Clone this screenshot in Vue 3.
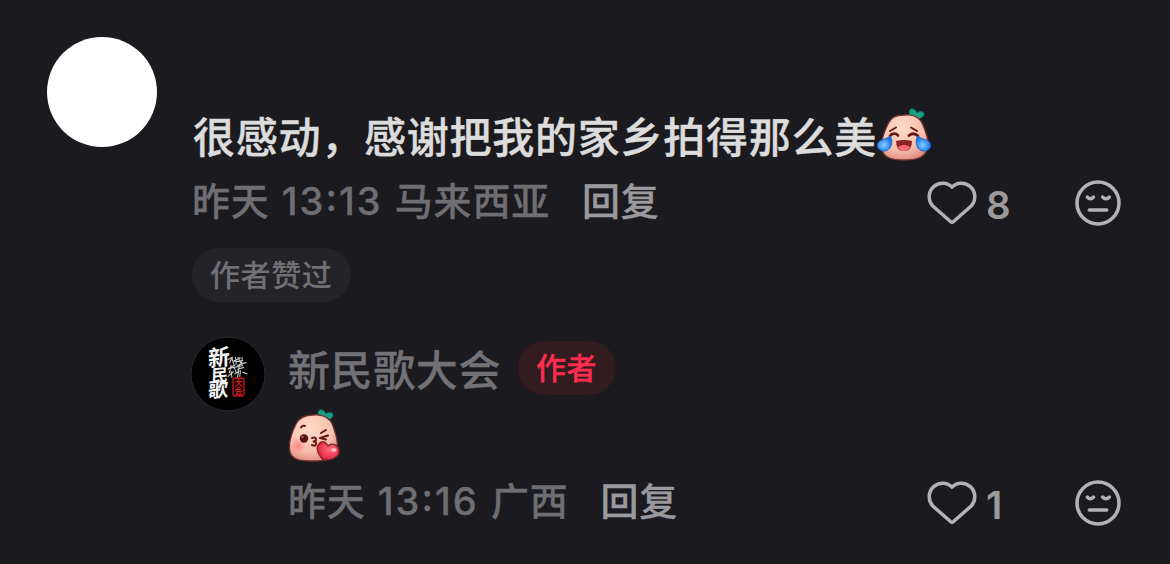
<template>
  <div class="comment-panel">
    <div class="comment">
      <div class="avatar"></div>
      <div class="comment-main">
        <div class="comment-text">
          <span>{{ comment.text }}</span>
          <!-- 笑哭表情 -->
          <svg class="emoji emoji-cry" viewBox="0 0 56 54">
            <defs>
              <radialGradient id="skin" cx="0.42" cy="0.3" r="0.75">
                <stop offset="0" stop-color="#ffdcc8" />
                <stop offset="0.65" stop-color="#f6bfad" />
                <stop offset="1" stop-color="#df887c" />
              </radialGradient>
              <radialGradient id="tear" cx="0.45" cy="0.6" r="0.6">
                <stop offset="0" stop-color="#8ecbff" />
                <stop offset="0.55" stop-color="#3f98fa" />
                <stop offset="1" stop-color="#1764dc" />
              </radialGradient>
            </defs>
            <path class="leaf" d="M36 10 C33 8 32 2 35 1 C38 0 40 3 41 5 C43 3 48 3 48 6 C48 10 43 10 41 12 Z" />
            <path class="body" fill="url(#skin)" d="M28 7 C37 6 44 9 47 17 C50 25 54 34 51 42 C48 50 40 52 28 52 C16 52 8 50 6 42 C4 34 8 24 12 16 C15 9 20 7 28 7 Z" />
            <path class="line" d="M14 23 L20 19.5 M35 19.5 L41 23" />
            <path class="line thick" d="M14 28 C16 25 20 25 22 27.5 M33 27.5 C36 25 39 25 42 28" />
            <path fill="#8c2427" d="M20 33 Q28 31 36 33 Q36 43 28 43 Q20 43 20 33 Z" />
            <path fill="#ff6970" d="M22 39 Q28 35 34 39 Q32 43 28 43 Q24 43 22 39 Z" />
            <path class="tear" fill="url(#tear)" d="M14 28 C18 34 15 43 8 43 C3 43 0 39 2 35 C4 31 10 32 14 28 Z" />
            <path class="tear" fill="url(#tear)" d="M42 28 C38 34 41 43 48 43 C53 43 56 39 54 35 C52 31 46 32 42 28 Z" />
          </svg>
        </div>
        <div class="meta-row">
          <span class="meta">{{ comment.day }} <span class="clock">{{ comment.time }}</span> {{ comment.place }}</span>
          <span class="reply-btn">回复</span>
          <div class="actions">
            <svg class="heart" viewBox="0 0 50 44">
              <path d="M25 6.2 C20.5 1.2 12 .8 6.7 5.6 C1 10.8 .8 19.2 5.8 25 L23.5 40.5 Q25 42 26.5 40.5 L44.2 25 C49.2 19.2 49 10.8 43.3 5.6 C38 .8 29.5 1.2 25 6.2 Z" />
            </svg>
            <span class="count">{{ comment.likes }}</span>
            <svg class="dislike" viewBox="0 0 46 46">
              <circle cx="23" cy="23" r="21" />
              <path d="M12.3 17 Q15.4 20.6 18.5 17 M27.6 17 Q31 20.6 34.3 17 M14.3 30 H31.7" />
            </svg>
          </div>
        </div>
        <div class="liked-tag">作者赞过</div>

        <div class="reply">
          <svg class="reply-avatar" viewBox="0 0 76 76">
            <circle cx="38" cy="38" r="37" fill="#000" stroke="#292930" stroke-width="1" />
            <g class="brush">
              <text transform="translate(18 31) rotate(-7) skewX(-7)" font-size="22">新</text>
              <text transform="translate(21 46) rotate(-4) skewX(-6)" font-size="17">民</text>
              <text transform="translate(18 62) rotate(-6) skewX(-8)" font-size="20">歌</text>
            </g>
            <path class="scribble" transform="translate(5 1) scale(.86 .95)" d="M38 24 L44 21 M40 28 L43 22 L45 29 M47 21 L48 29 M45 25 L53 22 M50 21 L54 29 M55 21 L54 28 L60 27 M38 34 L47 29 M42 29 L40 38 M45 31 L48 37 M49 30 L56 28 M49 34 L57 32 M52 28 L50 38 M38 42 L45 36 M42 36 L43 43 M46 39 L51 36 L49 43 M53 35 L52 42 M55 37 L61 39 M44 26 L56 25 M40 33 L56 30" />
            <rect x="43" y="42" width="11" height="18" rx="2" fill="#210000" stroke="#c71820" stroke-width="1.3" />
            <text class="seal" x="48.5" y="43">大会</text>
          </svg>
          <div class="reply-main">
            <div class="name-row">
              <span class="name">{{ reply.name }}</span>
              <span class="author-tag">作者</span>
            </div>
            <!-- 飞吻表情 -->
            <svg class="emoji emoji-kiss" viewBox="0 0 54 54">
              <defs>
                <radialGradient id="blush">
                  <stop offset="0" stop-color="#ff6f78" stop-opacity="0.8" />
                  <stop offset="1" stop-color="#ff7f80" stop-opacity="0" />
                </radialGradient>
                <radialGradient id="love" cx="0.6" cy="0.4" r="0.65">
                  <stop offset="0" stop-color="#ff7183" />
                  <stop offset="1" stop-color="#e31e3b" />
                </radialGradient>
              </defs>
              <path class="leaf" d="M33 10 C30 8 29 2 32 1 C35 0 37 3 38 5 C40 3 45 3 45 6 C45 10 40 10 38 12 Z" />
              <path class="body" fill="url(#skin)" d="M25 6 C35 5 42 8 45 17 C48 26 51 34 48 43 C45 51 38 52 25 52 C13 52 4 51 2 43 C0 34 4 23 8 15 C11 9 17 6 25 6 Z" />
              <circle cx="10" cy="37" r="8" fill="url(#blush)" />
              <path class="line" d="M13 18.5 Q14.5 16 17 17 M33 24 L38 21 M40 26.5 L32 29 L38 30.5" />
              <circle cx="16" cy="29.5" r="4.2" fill="#57100f" />
              <circle cx="14.5" cy="28" r="1.2" fill="#a75a50" />
              <path class="line" d="M24 29 Q28 27.5 28 30.5 Q28 32.5 25.5 32.5 Q29 33 28 35.5 Q27 37.5 24 36" />
              <path fill="url(#love)" stroke="#85242b" stroke-width="1.4" d="M35 51 C31 46 27 39 31 35 C34 31 38 33 40 37 C44 33 50 36 51 41 C52 47 46 51 35 51 Z" />
              <ellipse cx="46" cy="41" rx="2.6" ry="1.8" fill="#ffc9ca" />
            </svg>
            <div class="meta-row">
              <span class="meta">{{ reply.day }} <span class="clock">{{ reply.time }}</span> {{ reply.place }}</span>
              <span class="reply-btn">回复</span>
              <div class="actions">
                <svg class="heart" viewBox="0 0 50 44">
                  <path d="M25 6.2 C20.5 1.2 12 .8 6.7 5.6 C1 10.8 .8 19.2 5.8 25 L23.5 40.5 Q25 42 26.5 40.5 L44.2 25 C49.2 19.2 49 10.8 43.3 5.6 C38 .8 29.5 1.2 25 6.2 Z" />
                </svg>
                <span class="count">{{ reply.likes }}</span>
                <svg class="dislike" viewBox="0 0 46 46">
                  <circle cx="23" cy="23" r="21" />
                  <path d="M12.3 17 Q15.4 20.6 18.5 17 M27.6 17 Q31 20.6 34.3 17 M14.3 30 H31.7" />
                </svg>
              </div>
            </div>
          </div>
        </div>
      </div>
    </div>
  </div>
</template>

<script setup>
import { ref } from 'vue';

const comment = ref({
  text: '很感动，感谢把我的家乡拍得那么美',
  day: '昨天',
  time: '13:13',
  place: '马来西亚',
  likes: 8
});

const reply = ref({
  name: '新民歌大会',
  day: '昨天',
  time: '13:16',
  place: '广西',
  likes: 1
});
</script>

<style>
body {
  margin: 0;
  background: #1b1a1f;
}
</style>

<style scoped>
.comment-panel {
  box-sizing: border-box;
  width: 1170px;
  height: 564px;
  padding: 37px 49px 0 47px;
  overflow: hidden;
  background: #1b1a1f;
  font-family: Inter, "Noto Sans CJK SC", sans-serif;
  font-weight: 500;
  white-space: nowrap;
}

.comment {
  display: flex;
  gap: 35px;
}

.avatar {
  flex: none;
  width: 110px;
  height: 110px;
  border-radius: 50%;
  background: #fff;
}

.comment-main {
  flex: 1;
  padding-top: 71px;
}

.comment-text {
  display: flex;
  height: 58px;
  line-height: 60px;
  font-size: 42px;
  letter-spacing: 0.75px;
  color: #dcdcdc;
  -webkit-text-stroke: 0.4px #dcdcdc;
}

.comment-text span {
  margin-right: -1px;
  padding-left: 1px;
}

.emoji {
  display: block;
  flex: none;
}

.emoji-cry {
  width: 56px;
  height: 54px;
}

.emoji-kiss {
  width: 54px;
  height: 54px;
  margin-bottom: 3px;
}

.leaf {
  fill: #15a184;
  stroke: #0c6d61;
  stroke-width: 1;
}

.body {
  stroke: #6d302f;
  stroke-width: 1.3;
}

.line {
  fill: none;
  stroke: #681716;
  stroke-width: 2;
  stroke-linecap: round;
  stroke-linejoin: round;
}

.thick {
  stroke-width: 2.8;
}

.tear {
  stroke: #1b66cd;
  stroke-width: 1;
}

.meta-row {
  display: flex;
  align-items: center;
  height: 64px;
  font-size: 38px;
  letter-spacing: 0.8px;
}

.meta {
  color: #6f6e73;
  word-spacing: 1.3px;
  -webkit-text-stroke: 0.3px #6f6e73;
}

.clock {
  letter-spacing: 2px;
  font-feature-settings: "case";
}

.reply-btn {
  margin-left: 32px;
  color: #9a999d;
  -webkit-text-stroke: 0.3px #9a999d;
}

.actions {
  display: flex;
  align-items: center;
  margin-top: 10px;
  margin-left: auto;
}

.heart {
  width: 50px;
  height: 44px;
}

.heart path,
.dislike circle,
.dislike path {
  fill: none;
  stroke: #b2b2b8;
  stroke-width: 3.5;
  stroke-linecap: round;
  stroke-linejoin: round;
}

.count {
  width: 90px;
  margin-top: 4px;
  padding-left: 9px;
  box-sizing: border-box;
  margin-right: 8px;
  font-size: 38.5px;
  font-weight: 600;
  color: #9a9a9a;
}

.dislike {
  width: 46px;
  height: 46px;
}

.liked-tag {
  box-sizing: border-box;
  width: 159px;
  height: 54px;
  margin-top: 18px;
  padding-left: 18px;
  border-radius: 27px;
  background: #242428;
  color: #717075;
  font-size: 30px;
  line-height: 55px;
  letter-spacing: 0.6px;
}

.reply {
  display: flex;
  gap: 22px;
  margin-top: 34px;
  margin-left: -2px;
}

.reply-avatar {
  flex: none;
  width: 76px;
  height: 76px;
}

.brush {
  fill: #f4f4f4;
  font-family: "Noto Sans CJK SC", sans-serif;
  font-weight: 700;
}

.scribble {
  fill: none;
  stroke: #ccc;
  stroke-width: 1.2;
}

.seal {
  fill: #dc2027;
  font-family: "Noto Sans CJK SC", sans-serif;
  font-size: 8px;
  writing-mode: vertical-rl;
}

.reply-main {
  flex: 1;
}

.name-row {
  display: flex;
  align-items: center;
  height: 64px;
  margin-bottom: 9px;
}

.name {
  margin-bottom: 2px;
  color: #727176;
  font-size: 42px;
  letter-spacing: 0.6px;
  -webkit-text-stroke: 0.3px #727176;
}

.author-tag {
  box-sizing: border-box;
  width: 98px;
  height: 54px;
  margin-left: 17px;
  padding-left: 18px;
  border-radius: 27px;
  background: #321c1f;
  color: #fe2c4f;
  font-size: 30px;
  line-height: 55px;
  letter-spacing: 0.6px;
  -webkit-text-stroke: 0.3px #fe2c4f;
}
</style>
